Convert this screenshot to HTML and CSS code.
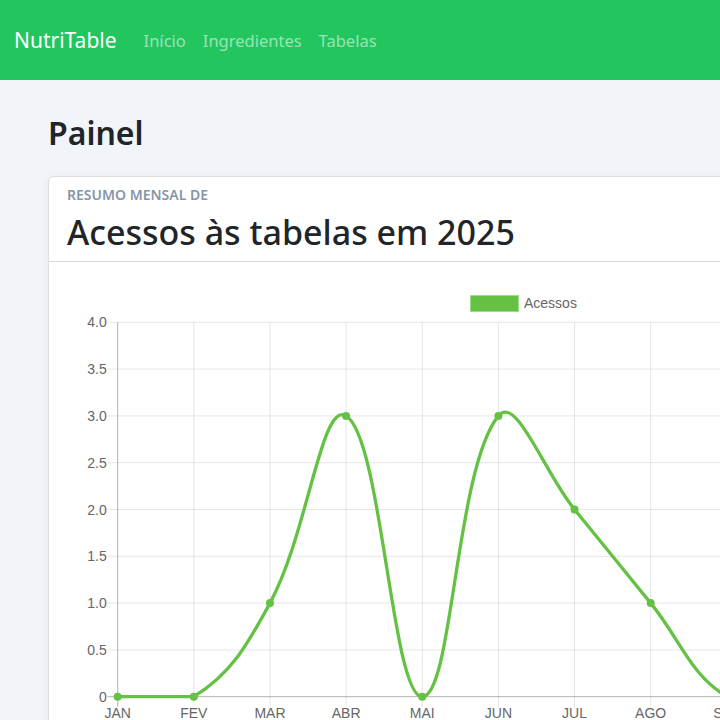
FILE: index.html
```html
<!DOCTYPE html>
<html lang="pt-BR">
<head>
    <meta charset="UTF-8">
    <meta name="viewport" content="width=device-width, initial-scale=1.0">
    <title>NutriTable - Painel</title>
    <link rel="stylesheet" href="styles.css">
</head>
<body>

    <nav class="navbar">
        <a class="brand" href="#">NutriTable</a>
        <a class="nav-link" href="#">Início</a>
        <a class="nav-link" href="#">Ingredientes</a>
        <a class="nav-link" href="#">Tabelas</a>
    </nav>

    <main class="main">
        <h1 class="page-title">Painel</h1>

        <div class="card">
            <div class="card-header">
                <div class="card-subtitle">Resumo mensal de</div>
                <h2 class="card-title">Acessos às tabelas em 2025</h2>
            </div>
            <div class="card-body">
                <svg id="chart" class="chart" width="914" height="460"></svg>
            </div>
        </div>
    </main>

    <script src="chart.js"></script>
</body>
</html>
```

FILE: styles.css
```css
body {
    margin: 0;
    font-family: "Noto Sans", "Open Sans", sans-serif;
    background-color: #f1f5f9;
    color: #212529;
    overflow: hidden;
}
.navbar {
    display: flex;
    align-items: center;
    height: 80px;
    padding: 0 14px;
    background-color: #22c55e;
}
.navbar a {
    text-decoration: none;
}
.brand {
    color: #fff;
    font-size: 21px;
    margin-right: 27px;
}
.nav-link {
    color: rgba(255, 255, 255, 0.55);
    font-size: 16.5px;
    margin-right: 17px;
}
.main {
    padding: 34px 48px 0;
}
.page-title {
    margin: 0 0 24px;
    font-size: 32px;
    font-weight: 600;
    line-height: 1.2;
}
.card {
    width: 960px;
    background-color: #fff;
    border: 1px solid #dcdfe3;
    border-radius: 6px;
    box-shadow: 0 2px 10px rgba(0, 0, 0, 0.06);
}
.card-header {
    padding: 8px 18px 7px;
    border-bottom: 1px solid #d5d8dc;
}
.card-subtitle {
    color: #8795a8;
    font-size: 14px;
    font-weight: 600;
    text-transform: uppercase;
}
.card-title {
    margin: 7px 0 0;
    font-size: 34px;
    font-weight: 500;
    line-height: 1.25;
}
.card-body {
    padding: 16px;
}
.chart {
    display: block;
    font-family: "Liberation Sans", Arial, sans-serif;
}
.chart .grid {
    stroke: rgba(0, 0, 0, 0.1);
    stroke-width: 1;
}
.chart .axis {
    stroke: rgba(0, 0, 0, 0.3);
    stroke-width: 1;
}
.chart .tick-label {
    fill: #666;
    font-size: 14px;
}
.chart .line {
    fill: none;
    stroke: #64c144;
    stroke-width: 3.3;
}
.chart .point {
    fill: #64c144;
}
.chart .legend-box {
    fill: #64c144;
    stroke: #9ddc88;
    stroke-width: 1;
}
```

FILE: chart.js
```javascript
const NS = 'http://www.w3.org/2000/svg';
const svg = document.getElementById('chart');

const labels = ['JAN', 'FEV', 'MAR', 'ABR', 'MAI', 'JUN', 'JUL', 'AGO', 'SET', 'OUT', 'NOV', 'DEZ'];
const values = [0, 0, 1, 3, 0, 3, 2, 1, 0, 0, 0, 0];

const area = { left: 52.7, right: 890, top: 44.3, bottom: 418.7 };
const step = 76.14;
const maxY = 4;

function el(name, attrs, text) {
    const node = document.createElementNS(NS, name);
    for (const k in attrs) node.setAttribute(k, attrs[k]);
    if (text) node.textContent = text;
    svg.appendChild(node);
    return node;
}

const xAt = i => area.left + i * step;
const yAt = v => area.bottom - (v / maxY) * (area.bottom - area.top);

// horizontal grid + y labels
for (let v = 0; v <= maxY; v += 0.5) {
    const y = yAt(v);
    el('line', { class: v === 0 ? 'axis' : 'grid', x1: area.left - 10, x2: area.right, y1: y, y2: y });
    el('text', { class: 'tick-label', x: area.left - 11, y: y + 5, 'text-anchor': 'end' }, v === 0 ? '0' : v.toFixed(1));
}

// vertical grid + x labels
labels.forEach((lab, i) => {
    const x = xAt(i);
    el('line', { class: i === 0 ? 'axis' : 'grid', x1: x, x2: x, y1: area.top, y2: area.bottom + 10 });
    el('text', { class: 'tick-label', x: x, y: area.bottom + 21, 'text-anchor': 'middle' }, lab);
});

// legend
el('rect', { class: 'legend-box', x: 405.5, y: 17.5, width: 48, height: 16 });
el('text', { class: 'tick-label', x: 459, y: 30 }, 'Acessos');

// spline like chart.js (tension 0.4)
const pts = values.map((v, i) => ({ x: xAt(i), y: yAt(v) }));
const t = 0.4;
pts.forEach((p, i) => {
    const prev = pts[i - 1] || p;
    const next = pts[i + 1] || p;
    const d01 = Math.hypot(p.x - prev.x, p.y - prev.y);
    const d12 = Math.hypot(next.x - p.x, next.y - p.y);
    const sum = d01 + d12 || 1;
    const fa = t * d01 / sum;
    const fb = t * d12 / sum;
    p.cpPrev = { x: p.x - fa * (next.x - prev.x), y: p.y - fa * (next.y - prev.y) };
    p.cpNext = { x: p.x + fb * (next.x - prev.x), y: p.y + fb * (next.y - prev.y) };
    [p.cpPrev, p.cpNext].forEach(c => {
        c.y = Math.min(Math.max(c.y, area.top), area.bottom);
    });
});

let d = 'M' + pts[0].x + ' ' + pts[0].y;
for (let i = 1; i < pts.length; i++) {
    const a = pts[i - 1], b = pts[i];
    d += ' C' + a.cpNext.x + ' ' + a.cpNext.y + ' ' + b.cpPrev.x + ' ' + b.cpPrev.y + ' ' + b.x + ' ' + b.y;
}
el('path', { class: 'line', d: d });

pts.forEach(p => el('circle', { class: 'point', cx: p.x, cy: p.y, r: 4 }));
```
